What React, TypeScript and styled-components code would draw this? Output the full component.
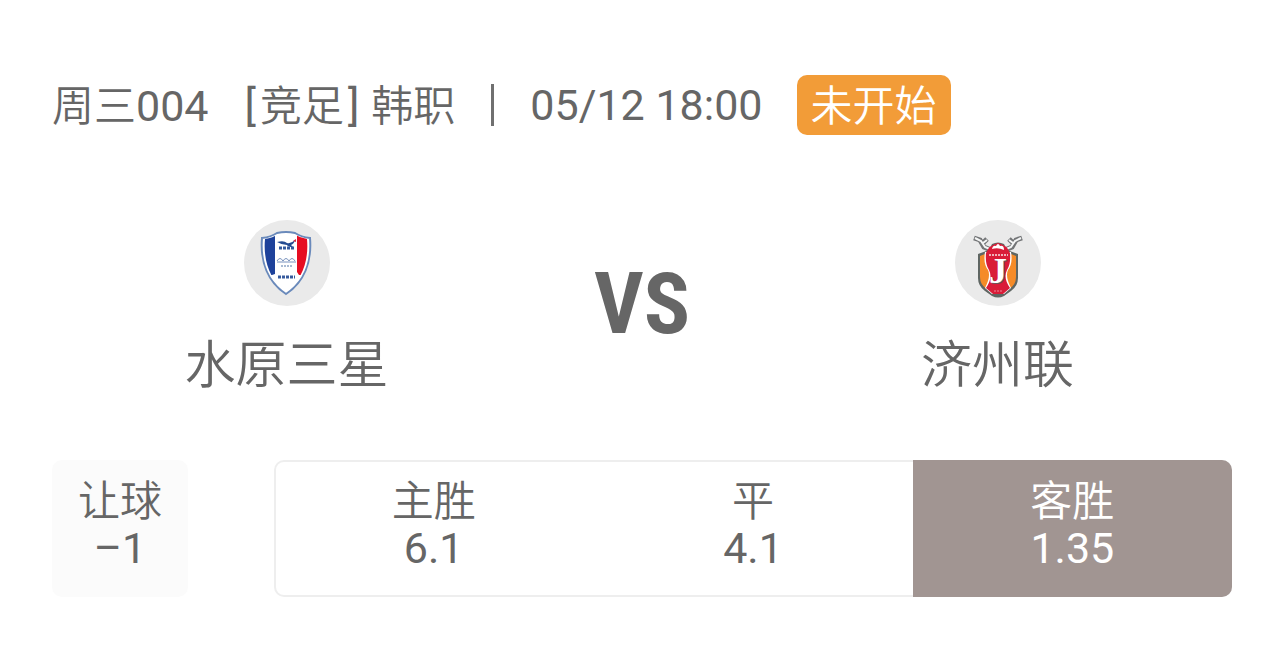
import React from 'react';
import styled, { createGlobalStyle } from 'styled-components';

const GlobalStyle = createGlobalStyle`
  *, *::before, *::after { box-sizing: border-box; }
  body {
    margin: 0;
    background: #fff;
    color: #666;
    font-family: 'Noto Sans', 'Noto Sans CJK SC', sans-serif;
    font-size: 42px;
    font-weight: 350;
  }
`;

const Card = styled.main`
  padding: 75px 52px 68px;
`;

const Header = styled.header`
  display: flex;
  align-items: center;
  height: 60px;
  line-height: 60px;
  white-space: nowrap;
`;

const MatchNumber = styled.span`
  margin-right: 36px;
`;

const League = styled.span`
  display: flex;
  gap: 12px;
`;

const Category = styled.span`
  display: flex;
  gap: 4px;
`;

const Divider = styled.span`
  width: 3px;
  height: 42px;
  margin: 0 36px;
  background: #707070;
`;

const Latin = styled.span`
  font-family: Roboto, sans-serif;
  font-size: 43px;
  font-weight: 400;
`;

const Status = styled.span`
  margin-left: 34px;
  padding: 0 14px;
  border-radius: 10px;
  background: #f29c38;
  color: #fff;
`;

const Teams = styled.section`
  display: grid;
  grid-template-columns: 1fr 242px 1fr;
  margin-top: 85px;
`;

const Team = styled.div`
  display: flex;
  flex-direction: column;
  align-items: center;
`;

const Crest = styled.span`
  display: block;
  width: 86px;
  height: 86px;
  border-radius: 50%;
  background: #eaeaea;
  svg { display: block; }
`;

const TeamName = styled.h2`
  margin: 20px 0 0;
  font-size: 51px;
  font-weight: 350;
  line-height: 74px;
`;

const Versus = styled.strong`
  align-self: start;
  margin-top: 34px;
  font-family: 'Roboto Condensed', Roboto, sans-serif;
  font-size: 86px;
  font-weight: 700;
  line-height: 100px;
  text-align: center;
`;

const Odds = styled.section`
  display: flex;
  gap: 86px;
  margin-top: 60px;
  font-family: Roboto, 'Noto Sans CJK SC', sans-serif;
  line-height: 46px;
`;

const Handicap = styled.div`
  flex: 0 0 136px;
  height: 137px;
  padding-top: 19px;
  border-radius: 10px;
  background: #fbfbfb;
  text-align: center;
`;

const Outcomes = styled.div`
  display: flex;
  flex: 1;
  overflow: hidden;
  height: 137px;
  border-radius: 10px;
  box-shadow: inset 0 0 0 2px #eee;
`;

const Outcome = styled.button<{ $active?: boolean }>`
  display: flex;
  flex: 1;
  flex-direction: column;
  align-items: center;
  padding: 19px 0 0;
  border: 0;
  background: ${({ $active }) => ($active ? '#a19592' : 'transparent')};
  color: ${({ $active }) => ($active ? '#fff' : 'inherit')};
  font: inherit;
  cursor: pointer;
`;

const Label = styled.span`
  display: block;
`;

const Value = styled(Latin)`
  display: block;
`;

const CrestLetter = styled.text`
  font-family: 'Liberation Serif', serif;
  font-size: 36px;
  font-weight: 700;
  text-anchor: middle;
`;

function SuwonCrest() {
  return (
    <svg width="86" height="86" viewBox="0 0 86 86" aria-hidden="true">
      <defs>
        <clipPath id="suwon">
          <path d="M21 19Q29 18 34 14Q42 12 50 14Q56 18 63 19C65 41 58 60 42 72C26 60 19 41 21 19Z" />
        </clipPath>
      </defs>
      <path fill="#fff" stroke="#6a8abb" strokeWidth="2" d="M18 18Q27 17 33 13Q42 11 51 13Q57 17 66 18C68 42 60 62 42 74C24 62 16 42 18 18Z" />
      <g clipPath="url(#suwon)">
        <path fill="#1e429b" d="M14 8h17v46l-3 1H14z" />
        <path fill="#e60d22" d="M53 8h18v47H55l-2-3z" />
      </g>
      <path fill="#244b91" d="M33 22q7-2 10 1q4 1 8-3q-1 4-4 5l2 2q-5 0-6-2q-5 0-10-3z" />
      <path stroke="#345a9e" strokeWidth="3" strokeDasharray="3 1" d="M35 28h15" />
      <path fill="#d22b41" d="M49 21l3-2v3z" />
      <path fill="none" stroke="#7892bd" strokeWidth="1" d="M33 41q3-5 6 0q3-5 6 0q3-5 6 0M33 42h19" />
      <path stroke="#a9bbd3" strokeWidth="2" strokeDasharray="2 1" d="M37 46h12" />
      <path stroke="#365a9d" strokeWidth="3" strokeDasharray="3 1" d="M34 57h17" />
    </svg>
  );
}

function JejuCrest() {
  return (
    <svg width="86" height="86" viewBox="0 0 86 86" aria-hidden="true">
      <path fill="none" stroke="#737577" strokeWidth="5" d="M19 18l6 2l4 7l7 3M27 24l5-5M67 18l-6 2l-4 7l-7 3M59 24l-5-5" />
      <path fill="none" stroke="#f4f5f5" strokeWidth="2" d="M20 18l6 3l4 6l7 3M28 23l4-3M66 18l-6 3l-4 6l-7 3M58 23l-4-3" />
      <path fill="#5f6663" d="M34 30L23 34v24q0 8 7 13l7 5q6 3 12 0l7-5q7-5 7-13V34l-11-4-3-6q-6-3-12 0z" />
      <path fill="#f58b28" d="M35 32l-10 4v21q0 8 7 12l7 5h8l7-5q7-4 7-12V36l-10-4z" />
      <path fill="#fff" d="M30 32q-2 12 3 18q3 6-3 18l7 6h12l7-6q-6-12-3-18q5-6 3-18z" />
      <path fill="#d91c38" d="M31 33q3-8 12-10q9 2 12 10q1 11-3 17q-4 8 3 18l-7 6H38l-7-6q7-10 3-18q-4-6-3-17z" />
      <path fill="#fff" d="M37 29q1-4 4-3q2-4 4 0q4-1 4 4q-6-3-12-1z" />
      <path stroke="#efb0b9" strokeWidth="2" strokeDasharray="2 1" d="M34 35h19" />
      <CrestLetter x="44" y="64" fill="#6b5357">J</CrestLetter>
      <CrestLetter x="43" y="63" fill="#fff">J</CrestLetter>
      <path stroke="#e9899a" strokeWidth="1" strokeDasharray="2 1" d="M39 71h8" />
    </svg>
  );
}

const outcomes = [
  { label: '主胜', value: '6.1' },
  { label: '平', value: '4.1' },
  { label: '客胜', value: '1.35', active: true },
];

export default function App() {
  return (
    <>
      <GlobalStyle />
      <Card>
        <Header>
          <MatchNumber>周三<Latin>004</Latin></MatchNumber>
          <League>
            <Category><Latin>[</Latin><span>竞足</span><Latin>]</Latin></Category>
            <span>韩职</span>
          </League>
          <Divider />
          <Latin as="time">05/12 18:00</Latin>
          <Status>未开始</Status>
        </Header>
        <Teams>
          <Team>
            <Crest><SuwonCrest /></Crest>
            <TeamName>水原三星</TeamName>
          </Team>
          <Versus>VS</Versus>
          <Team>
            <Crest><JejuCrest /></Crest>
            <TeamName>济州联</TeamName>
          </Team>
        </Teams>
        <Odds>
          <Handicap>
            <Label>让球</Label>
            <Value>–1</Value>
          </Handicap>
          <Outcomes>
            {outcomes.map(({ label, value, active }) => (
              <Outcome key={label} type="button" $active={active} aria-pressed={!!active}>
                <Label>{label}</Label>
                <Value>{value}</Value>
              </Outcome>
            ))}
          </Outcomes>
        </Odds>
      </Card>
    </>
  );
}
